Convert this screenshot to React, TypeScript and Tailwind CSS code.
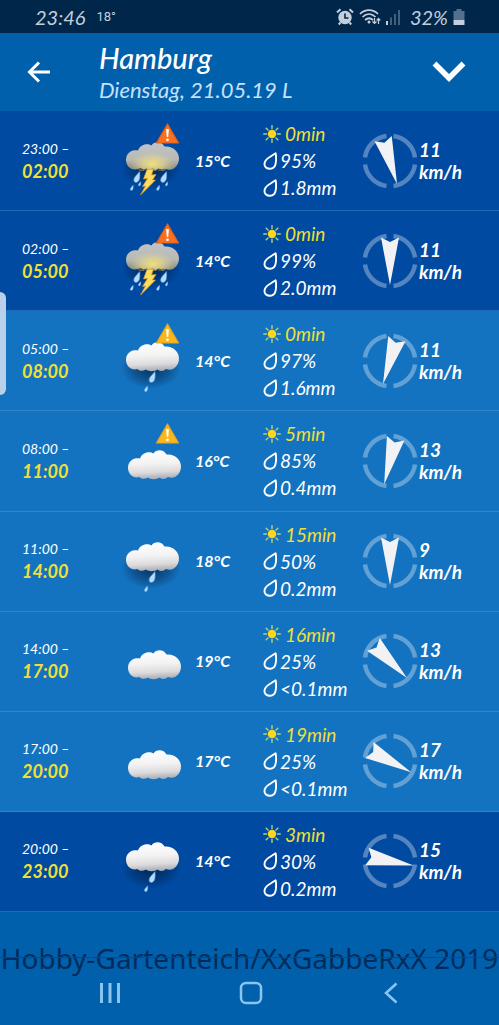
import React from 'react';

type Sky = 'storm' | 'rain' | 'cloud';

interface Forecast {
  from: string;
  to: string;
  sky: Sky;
  warning?: 'orange' | 'amber';
  temperature: number;
  sunshine: number;
  humidity: number;
  rain: string;
  wind: number;
  direction: number;
  night?: boolean;
}

const forecasts: Forecast[] = [
  { from: '23:00', to: '02:00', sky: 'storm', warning: 'orange', temperature: 15, sunshine: 0, humidity: 95, rain: '1.8mm', wind: 11, direction: -17, night: true },
  { from: '02:00', to: '05:00', sky: 'storm', warning: 'orange', temperature: 14, sunshine: 0, humidity: 99, rain: '2.0mm', wind: 11, direction: 0, night: true },
  { from: '05:00', to: '08:00', sky: 'rain', warning: 'amber', temperature: 14, sunshine: 0, humidity: 97, rain: '1.6mm', wind: 11, direction: 17 },
  { from: '08:00', to: '11:00', sky: 'cloud', warning: 'amber', temperature: 16, sunshine: 5, humidity: 85, rain: '0.4mm', wind: 13, direction: 14 },
  { from: '11:00', to: '14:00', sky: 'rain', temperature: 18, sunshine: 15, humidity: 50, rain: '0.2mm', wind: 9, direction: 0 },
  { from: '14:00', to: '17:00', sky: 'cloud', temperature: 19, sunshine: 16, humidity: 25, rain: '<0.1mm', wind: 13, direction: -45 },
  { from: '17:00', to: '20:00', sky: 'cloud', temperature: 17, sunshine: 19, humidity: 25, rain: '<0.1mm', wind: 17, direction: -62 },
  { from: '20:00', to: '23:00', sky: 'rain', temperature: 14, sunshine: 3, humidity: 30, rain: '0.2mm', wind: 15, direction: -79, night: true },
];

const cloudPath =
  'M11 31.5 C13 31 14.5 31 16 31.5 C17.5 26 25 23.5 29.5 26.5 C32 22 40 22 42.5 27.5 C50 26.5 57 32 57 39.5 C57 47 50.5 53 44 50 C41.5 52.5 37.5 52.5 35.5 50.5 C32 53 26.5 52.5 24 50.5 C20.5 52.5 17 52 15.5 50 C9.5 52 4 47 4 41 C4 36 7 32.5 11 31.5 Z';

const Drop = ({ x, y, scale = 1 }: { x: number; y: number; scale?: number }) => (
  <path
    d="M3 -6 C3.4 -1 3.4 4.6 -0.6 5 C-3.6 5 -3.4 1 -1.2 -1.2 Z"
    fill="#b4dcfa"
    stroke="#5b9bd8"
    strokeWidth="0.6"
    transform={`translate(${x} ${y}) scale(${scale})`}
  />
);

const SkyIcon = ({ sky, warning }: { sky: Sky; warning?: 'orange' | 'amber' }) => {
  const fill = sky === 'storm' ? 'url(#storm-cloud)' : 'url(#white-cloud)';

  return (
    <svg viewBox="0 0 64 84" className="h-[84px] w-16" aria-hidden="true">
      {sky !== 'cloud' && <ellipse cx="29" cy="49" rx="30" ry="21" fill="url(#cloud-shadow)" />}
      <g transform={sky === 'cloud' ? 'translate(2 8)' : undefined}>
        <path d={cloudPath} fill={fill} />
        {sky === 'storm' && (
          <>
            <path d={cloudPath} fill="url(#storm-glow)" />
            <path d="M15.5 50 l3 -1 3 1.5 3-1 3 1.5 3-1.5 3 1.5 3-1.5 3 1 4-1 c-3 3-7 3-9 1 c-4 3-9 2-11 0 c-4 2-7 1-8-0.5Z" fill="#55513a" />
          </>
        )}
      </g>
      {sky === 'storm' && (
        <>
          <Drop x={14.7} y={58.5} />
          <Drop x={9.7} y={69} scale={0.5} />
          <Drop x={17.5} y={65} scale={0.4} />
          <Drop x={41.5} y={58.5} />
          <Drop x={36} y={69} scale={0.5} />
          <Drop x={44.5} y={65} scale={0.4} />
          <path d="M25 50.5 L31.5 50 L29.5 56 L34 55.5 L30.5 61 L33.5 61 L18.5 76 L23.5 67 L20.5 67.5 L25.5 59.5 L21.5 60 Z" fill="#ffdc5e" stroke="#d99b2b" strokeWidth="0.7" />
        </>
      )}
      {sky === 'rain' && (
        <>
          <Drop x={30} y={58.5} />
          <Drop x={24} y={70} scale={0.55} />
        </>
      )}
      {warning && (
        <>
          <path
            d="M45.5 5 L56.5 24 H34.5 Z"
            fill={warning === 'orange' ? '#fb6f1d' : '#fdb617'}
            stroke={warning === 'orange' ? '#e0601d' : '#e3a52b'}
            strokeWidth="1.2"
            strokeLinejoin="round"
          />
          <path d="M44.1 10 h2.8 l-0.7 8 h-1.4 Z" fill="#fff" />
          <circle cx="45.5" cy="20.8" r="1.4" fill="#fff" />
        </>
      )}
    </svg>
  );
};

// Gradients shared by all the cloud drawings
const CloudGradients = () => (
  <svg className="absolute h-0 w-0" aria-hidden="true">
    <defs>
      <linearGradient id="white-cloud" x1="0" y1="0" x2="0.1" y2="1">
        <stop offset="0" stopColor="#ffffff" />
        <stop offset="0.5" stopColor="#f4f3f3" />
        <stop offset="0.8" stopColor="#dcdadc" />
        <stop offset="1" stopColor="#aeb2bb" />
      </linearGradient>
      <linearGradient id="storm-cloud" x1="0" y1="0" x2="0" y2="1">
        <stop offset="0" stopColor="#c4c4c6" />
        <stop offset="0.6" stopColor="#b8b8b4" />
        <stop offset="1" stopColor="#85836f" />
      </linearGradient>
      <radialGradient id="storm-glow" cx="0.5" cy="0.75" r="0.42">
        <stop offset="0" stopColor="#f2e07a" />
        <stop offset="0.5" stopColor="#e2d68e" stopOpacity="0.7" />
        <stop offset="1" stopColor="#d8d2a0" stopOpacity="0" />
      </radialGradient>
      <radialGradient id="cloud-shadow">
        <stop offset="0" stopColor="#001c40" stopOpacity="0.75" />
        <stop offset="0.6" stopColor="#001c40" stopOpacity="0.35" />
        <stop offset="1" stopColor="#001c40" stopOpacity="0" />
      </radialGradient>
    </defs>
  </svg>
);

const SunIcon = () => (
  <svg viewBox="0 0 18 18" className="h-[18px] w-[18px]" aria-hidden="true">
    <g stroke="#a5cf86" strokeWidth="1.5" strokeLinecap="round">
      <path d="M9 0.7 V3.5 M9 14.5 V17.3 M0.7 9 H3.5 M14.5 9 H17.3 M3.2 3.2 L5 5 M13 13 L14.8 14.8 M14.8 3.2 L13 5 M5 13 L3.2 14.8" />
    </g>
    <circle cx="9" cy="9" r="4.2" fill="#ffd51c" />
  </svg>
);

const DropIcon = () => (
  <svg viewBox="0 0 14 18" className="h-[18px] w-[14px]" aria-hidden="true">
    <path d="M12.6 1.2 C13.3 5 13.3 9 12.4 12.5 C11 17.8 3.5 18.3 1.7 13.5 C0.7 9.5 3 7.5 6 5.5 C8.5 4 10.5 2.5 12.6 1.2 Z" fill="none" stroke="#fff" strokeWidth="1.9" strokeLinejoin="round" />
  </svg>
);

const Compass = ({ direction }: { direction: number }) => (
  <svg viewBox="-28 -28 56 56" className="h-14 w-14 shrink-0" aria-hidden="true">
    <g fill="none" stroke="#fff" strokeOpacity="0.33" strokeWidth="4.5">
      <path d="M3.5 -25 A25.2 25.2 0 0 1 25 -3.5" />
      <path d="M25 3.5 A25.2 25.2 0 0 1 3.5 25" />
      <path d="M-3.5 25 A25.2 25.2 0 0 1 -25 3.5" />
      <path d="M-25 -3.5 A25.2 25.2 0 0 1 -3.5 -25" />
    </g>
    <path d="M-9 -23.5 L0 -19 L9 -23.5 L0 24 Z" fill="#f2f2f4" transform={`rotate(${direction})`} />
  </svg>
);

const ForecastRow = ({ item }: { item: Forecast }) => (
  <li
    className={`grid grid-cols-[122fr_73fr_68fr_99fr_137fr] items-center border-b ${
      item.night ? 'border-[#2268b8] bg-[#004aa1]' : 'border-[#3484cc] bg-[#1473c0]'
    }`}
  >
    <div className="pl-[22px]">
      <p className="text-sm leading-5">{item.from} –</p>
      <p className="text-lg leading-6 font-bold text-[#f0df35]">{item.to}</p>
    </div>
    <SkyIcon sky={item.sky} warning={item.warning} />
    <p className="text-base leading-6 font-bold">{item.temperature}°C</p>
    <div className="text-[19px] leading-[27px]">
      <p className="flex items-center gap-1 text-[#f0df35]">
        <SunIcon />
        {item.sunshine}min
      </p>
      <p className="flex items-center gap-[3px]">
        <DropIcon />
        {item.humidity}%
      </p>
      <p className="flex items-center gap-[3px]">
        <DropIcon />
        {item.rain}
      </p>
    </div>
    <div className="flex items-center gap-px">
      <Compass direction={item.direction} />
      <p className="text-[19px] leading-[22px] font-bold">
        {item.wind}
        <br />
        km/h
      </p>
    </div>
  </li>
);

const StatusBar = () => (
  <div className="flex h-[33px] items-center bg-[#00264a] pr-[34px] pl-[35px] text-[#c3cfdd]">
    <span className="text-xl leading-6">23:46</span>
    <span className="ml-2 pl-[3px] font-[Roboto] text-[13px] leading-6 not-italic">18°</span>
    <div className="ml-auto flex items-center gap-[5px]">
      <svg viewBox="0 0 18 18" className="h-[18px] w-[18px]" aria-hidden="true">
        <circle cx="9" cy="9.5" r="6.7" fill="currentColor" />
        <path d="M1 4.5 L4.5 1.2 M17 4.5 L13.5 1.2 M4.5 14.5 L2.8 16.5 M13.5 14.5 L15.2 16.5" stroke="currentColor" strokeWidth="2" />
        <path d="M9 5.5 V10 H12.5" fill="none" stroke="#00264a" strokeWidth="1.6" />
      </svg>
      <svg viewBox="0 0 42 18" className="h-[18px] w-[42px]" aria-hidden="true">
        <g fill="none" stroke="currentColor" strokeWidth="1.7">
          <path d="M1 6 C6 0.8 14 0.8 19 6" />
          <path d="M3.5 9 C7.5 5 12.5 5 16.5 9" />
          <path d="M6 12 C8.5 9.8 11.5 9.8 14 12" />
        </g>
        <circle cx="10" cy="14" r="1.5" fill="currentColor" />
        <path d="M15.5 10 V15 M13.5 13.5 L15.5 15.5 L17.5 13.5 M19.5 16 V11 M17.7 12.5 L19.5 10.5 L21.3 12.5" fill="none" stroke="currentColor" strokeWidth="1.2" />
        <path d="M28 13 V17" stroke="currentColor" strokeWidth="2" />
        <path d="M32 9.5 V17 M36 6 V17 M40 2 V17" stroke="currentColor" strokeOpacity="0.4" strokeWidth="1.7" />
      </svg>
      <span className="pl-1 text-xl leading-6">32%</span>
      <svg viewBox="0 0 12 16" className="h-4 w-3" aria-hidden="true">
        <path d="M3.5 0 H8.5 V2 H11.5 V11 H0.5 V2 H3.5 Z" fill="#53708e" />
        <path d="M0.5 11 H11.5 V16 H0.5 Z" fill="currentColor" />
      </svg>
    </div>
  </div>
);

const Header = () => (
  <header className="flex h-[78px] items-center bg-[#0060ac] pr-[33px] pl-[27px]">
    <button type="button" aria-label="Zurück">
      <svg viewBox="0 0 24 24" className="h-6 w-6" fill="none" stroke="#fff" strokeWidth="3" aria-hidden="true">
        <path d="M12 2.5 L2.5 12 L12 21.5 M2.5 12 H23" />
      </svg>
    </button>
    <div className="ml-12">
      <h1 className="text-[29px] leading-9 font-medium">Hamburg</h1>
      <p className="text-[22px] leading-7 text-[#c4e2fa]">Dienstag, 21.05.19 L</p>
    </div>
    <button type="button" aria-label="Tag wählen" className="ml-auto">
      <svg viewBox="0 0 34 22" className="h-[22px] w-[34px]" fill="none" stroke="#fff" strokeWidth="5.5" aria-hidden="true">
        <path d="M2.5 2.5 L17 17 L31.5 2.5" />
      </svg>
    </button>
  </header>
);

const Footer = () => (
  <footer className="bg-[#0060ac]">
    <div className="relative pt-7 text-center font-['Noto_Sans'] text-[28px] leading-9 whitespace-nowrap text-[#012c5c] not-italic">
      Hobby-Gartenteich/XxGabbeRxX 2019
      <div className="absolute inset-x-0 top-[45px] h-px bg-[#004c8c]" />
    </div>
    <nav className="grid h-[49px] grid-cols-[198fr_106fr_195fr] text-[#8cc4f0]">
      <button type="button" aria-label="Letzte Apps" className="flex items-center justify-end pr-[77px] pb-4">
        <svg viewBox="0 0 22 22" className="h-[22px] w-[22px]" stroke="currentColor" strokeWidth="3" aria-hidden="true">
          <path d="M2.5 1 V21 M11 1 V21 M19.5 1 V21" />
        </svg>
      </button>
      <button type="button" aria-label="Startseite" className="grid place-items-center pb-4">
        <svg viewBox="0 0 24 24" className="h-6 w-6" fill="none" stroke="currentColor" strokeWidth="2.5" aria-hidden="true">
          <rect x="2" y="2" width="20" height="20" rx="5" />
        </svg>
      </button>
      <button type="button" aria-label="Zurück" className="flex items-center pb-4 pl-20">
        <svg viewBox="0 0 14 22" className="h-[22px] w-[14px]" fill="none" stroke="currentColor" strokeWidth="2.5" aria-hidden="true">
          <path d="M12.5 1.5 L2 11 L12.5 20.5" />
        </svg>
      </button>
    </nav>
  </footer>
);

const App: React.FC = () => {
  return (
    <div className="relative flex min-h-screen flex-col bg-[#0060ac] font-[Lato,sans-serif] text-white italic">
      <CloudGradients />
      <StatusBar />
      <Header />
      <ul className="grid flex-1 auto-rows-fr">
        {forecasts.map((item) => (
          <ForecastRow key={item.from} item={item} />
        ))}
      </ul>
      <Footer />
      {/* Edge panel handle */}
      <div className="absolute top-[292px] left-0 h-[103px] w-[6px] rounded-r-md bg-[#b9d0ea]" />
    </div>
  );
};

export default App;
